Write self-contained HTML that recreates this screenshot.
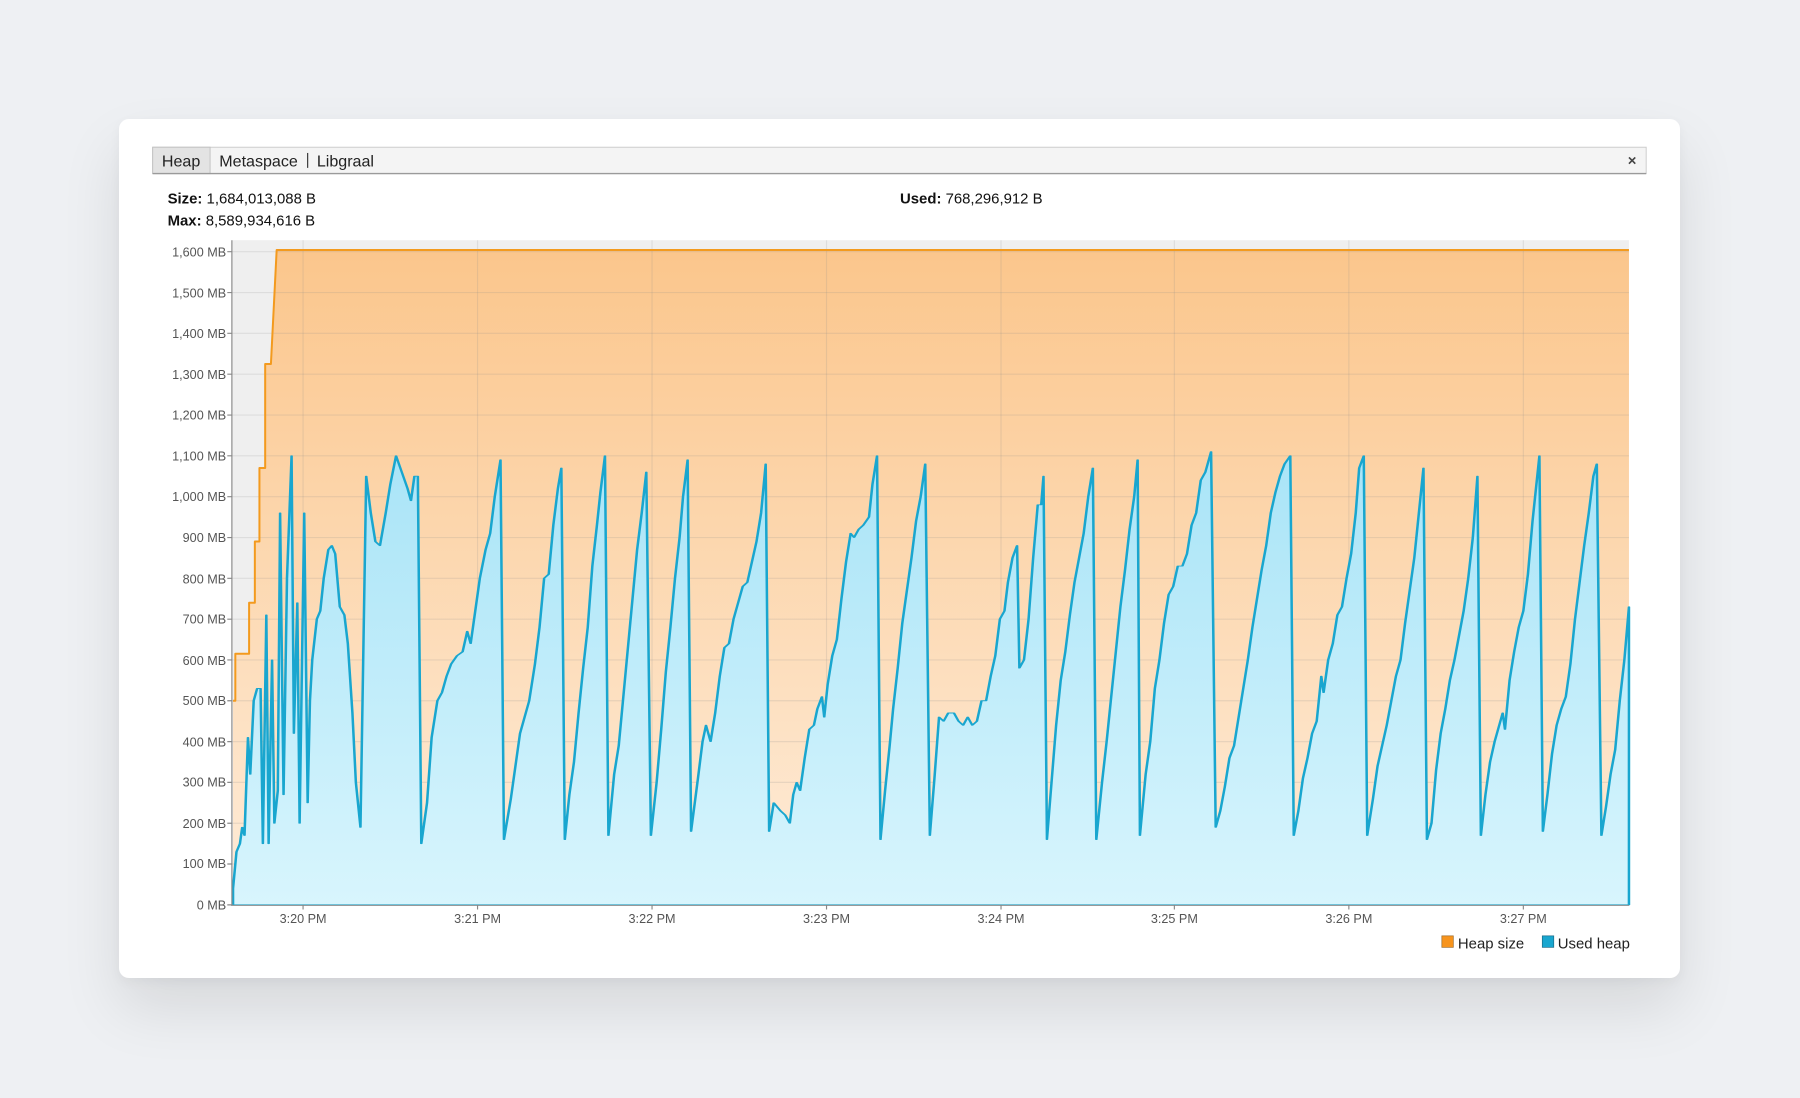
<!DOCTYPE html>
<html><head><meta charset="utf-8"><style>
html,body{margin:0;padding:0;width:1800px;height:1098px;background:#eef0f3;overflow:hidden}
.card{position:absolute;left:119px;top:119px;width:1561px;height:859px;background:#fff;border-radius:10px;box-shadow:0 30px 60px rgba(0,0,0,0.10),0 4px 12px rgba(0,0,0,0.04)}
svg{position:absolute;left:0;top:0}
text{font-family:"Liberation Sans",sans-serif}
</style></head><body>
<div class="card"></div>
<svg width="1800" height="1098" viewBox="0 0 1568 956">
<defs>
<linearGradient id="og" x1="0" y1="0" x2="0" y2="1">
<stop offset="0" stop-color="#feecd9"/><stop offset="1" stop-color="#fbc68c"/></linearGradient>
<linearGradient id="bg" x1="0" y1="0" x2="0" y2="1">
<stop offset="0" stop-color="#d8f5fd"/><stop offset="1" stop-color="#a9e4f7"/></linearGradient>
</defs>
<!-- tabs -->
<rect x="133" y="128" width="1301" height="23" fill="#f4f4f4" stroke="#c9c9c9" stroke-width="0.8"/>
<rect x="133" y="128" width="50" height="23" fill="#e3e3e3" stroke="#c0c0c0" stroke-width="0.8"/>
<line x1="133" y1="151" x2="1434" y2="151" stroke="#9a9a9a" stroke-width="1.2"/>
<text x="141" y="145" font-size="14" fill="#222">Heap</text>
<text x="191" y="145" font-size="14" fill="#222">Metaspace</text>
<line x1="268" y1="133" x2="268" y2="146" stroke="#333" stroke-width="1"/>
<text x="276" y="145" font-size="14" fill="#222">Libgraal</text>
<text x="1418" y="144" font-size="13" font-weight="bold" fill="#444">×</text>
<!-- info -->
<text x="146" y="177" font-size="13" fill="#111"><tspan font-weight="bold">Size:</tspan> 1,684,013,088 B</text>
<text x="146" y="196" font-size="13" fill="#111"><tspan font-weight="bold">Max:</tspan> 8,589,934,616 B</text>
<text x="784" y="177" font-size="13" fill="#111"><tspan font-weight="bold">Used:</tspan> 768,296,912 B</text>
<!-- plot bg -->
<rect x="202" y="209" width="1217" height="579" fill="#efefef"/>
<g transform="translate(0,788) scale(1,-0.35563)">
<path fill="url(#og)" d="M203,0 L203,500 L205,500 L205,615 L217,615 L217,740 L222,740 L222,890 L226,890 L226,1070 L231,1070 L231,1325 L236,1325 L241,1604 L1419,1604 L1419,0 Z"/>
<path id="u" fill="url(#bg)" d="M203,0 L203,40 L206,130 L209,150 L211,190 L213,170 L216,410 L218,320 L221,500 L224,530 L227,530 L229,150 L232,710 L234,150 L237,600 L239,200 L242,280 L244,960 L247,270 L250,800 L254,1100 L256,420 L259,740 L261,200 L265,960 L268,250 L270,500 L272,600 L276,700 L279,720 L282,800 L286,870 L289,880 L292,860 L296,730 L300,710 L303,640 L307,470 L310,300 L314,190 L319,1050 L323,960 L327,890 L331,880 L336,960 L340,1030 L345,1100 L350,1060 L355,1020 L358,990 L361,1050 L364,1050 L367,150 L372,250 L376,410 L381,500 L385,520 L389,560 L393,590 L398,610 L403,620 L407,670 L410,640 L414,720 L418,800 L423,870 L427,910 L431,1000 L436,1090 L439,160 L445,260 L449,340 L453,420 L457,460 L461,500 L466,590 L470,680 L474,800 L478,810 L482,930 L486,1020 L489,1070 L492,160 L496,270 L500,350 L504,470 L508,580 L512,680 L516,830 L520,930 L523,1010 L527,1100 L530,170 L535,320 L539,390 L543,510 L547,630 L551,750 L555,870 L559,960 L563,1060 L567,170 L572,300 L576,430 L580,570 L584,680 L588,800 L592,900 L595,1000 L599,1090 L602,180 L608,310 L612,400 L615,440 L619,400 L623,470 L627,560 L631,630 L635,640 L639,700 L643,740 L647,780 L651,790 L655,840 L659,890 L663,960 L667,1080 L670,180 L674,250 L677,240 L680,230 L684,220 L688,200 L691,270 L694,300 L697,280 L701,360 L705,430 L709,440 L712,480 L716,510 L718,460 L721,540 L725,610 L729,650 L733,750 L737,840 L741,910 L744,900 L748,920 L752,930 L757,950 L760,1030 L764,1100 L767,160 L771,280 L775,390 L778,480 L782,580 L786,690 L790,770 L794,850 L798,940 L802,1000 L806,1080 L810,170 L814,310 L818,460 L822,450 L826,470 L831,470 L835,450 L839,440 L843,460 L847,440 L851,450 L855,500 L859,500 L863,560 L867,610 L871,700 L875,720 L878,790 L882,850 L886,880 L888,580 L892,600 L896,700 L900,850 L904,980 L907,980 L909,1050 L912,160 L916,300 L920,440 L924,550 L928,620 L932,710 L936,790 L940,850 L944,910 L948,1000 L952,1070 L955,160 L960,300 L964,400 L968,510 L972,620 L976,730 L980,820 L984,920 L988,1000 L991,1090 L993,170 L998,320 L1002,400 L1006,530 L1010,600 L1014,690 L1018,760 L1022,780 L1026,830 L1030,830 L1034,860 L1038,930 L1042,960 L1046,1040 L1050,1060 L1055,1110 L1059,190 L1063,230 L1067,290 L1071,360 L1075,390 L1079,460 L1083,530 L1087,600 L1091,680 L1095,750 L1099,820 L1103,880 L1107,960 L1111,1010 L1115,1050 L1119,1080 L1124,1100 L1127,170 L1131,230 L1135,310 L1139,360 L1143,420 L1147,450 L1151,560 L1153,520 L1157,600 L1161,640 L1165,710 L1169,730 L1173,800 L1177,860 L1181,960 L1184,1070 L1188,1100 L1191,170 L1196,260 L1200,340 L1204,390 L1208,440 L1212,500 L1216,560 L1220,600 L1224,690 L1228,770 L1232,850 L1236,960 L1240,1070 L1243,160 L1247,200 L1251,330 L1255,420 L1259,480 L1263,550 L1267,600 L1271,660 L1275,720 L1279,800 L1283,900 L1287,1050 L1290,170 L1294,270 L1298,350 L1302,400 L1306,440 L1309,470 L1311,430 L1315,550 L1319,620 L1323,680 L1327,720 L1331,810 L1335,940 L1338,1020 L1341,1100 L1344,180 L1348,270 L1352,370 L1356,440 L1360,480 L1364,510 L1368,590 L1372,700 L1376,790 L1380,880 L1384,960 L1388,1050 L1391,1080 L1395,170 L1399,240 L1403,320 L1407,380 L1411,500 L1415,600 L1419,730 L1419,0 Z"/>
</g>
<!-- grid -->
<g stroke="#8a8a8a" stroke-opacity="0.18" stroke-width="1">
<line x1="202" y1="219" x2="1419" y2="219"/><line x1="202" y1="254.6" x2="1419" y2="254.6"/><line x1="202" y1="290.1" x2="1419" y2="290.1"/><line x1="202" y1="325.7" x2="1419" y2="325.7"/><line x1="202" y1="361.3" x2="1419" y2="361.3"/><line x1="202" y1="396.8" x2="1419" y2="396.8"/><line x1="202" y1="432.4" x2="1419" y2="432.4"/><line x1="202" y1="468" x2="1419" y2="468"/><line x1="202" y1="503.5" x2="1419" y2="503.5"/><line x1="202" y1="539.1" x2="1419" y2="539.1"/><line x1="202" y1="574.6" x2="1419" y2="574.6"/><line x1="202" y1="610.2" x2="1419" y2="610.2"/><line x1="202" y1="645.8" x2="1419" y2="645.8"/><line x1="202" y1="681.3" x2="1419" y2="681.3"/><line x1="202" y1="716.9" x2="1419" y2="716.9"/><line x1="202" y1="752.4" x2="1419" y2="752.4"/>
<line x1="264" y1="209" x2="264" y2="788"/><line x1="416" y1="209" x2="416" y2="788"/><line x1="568" y1="209" x2="568" y2="788"/><line x1="720" y1="209" x2="720" y2="788"/><line x1="872" y1="209" x2="872" y2="788"/><line x1="1023" y1="209" x2="1023" y2="788"/><line x1="1175" y1="209" x2="1175" y2="788"/><line x1="1327" y1="209" x2="1327" y2="788"/>
</g>
<!-- lines -->
<g transform="translate(0,788) scale(1,-0.35563)" fill="none" stroke-width="2" stroke-linejoin="round">
<path vector-effect="non-scaling-stroke" stroke="#f39a1e" stroke-width="2" d="M203,500 L205,500 L205,615 L217,615 L217,740 L222,740 L222,890 L226,890 L226,1070 L231,1070 L231,1325 L236,1325 L241,1604 L1419,1604"/>
<use href="#u" fill="none" stroke="#19a6cf" vector-effect="non-scaling-stroke" stroke-width="2.2"/>
</g>
<!-- axes -->
<line x1="202" y1="209" x2="202" y2="789" stroke="#888" stroke-width="1"/>
<line x1="202" y1="788.5" x2="1419" y2="788.5" stroke="#999" stroke-width="1"/>
<g font-size="11" fill="#555" text-anchor="end">
<text x="197" y="223">1,600 MB</text><text x="197" y="259">1,500 MB</text><text x="197" y="294">1,400 MB</text><text x="197" y="330">1,300 MB</text><text x="197" y="365">1,200 MB</text><text x="197" y="401">1,100 MB</text><text x="197" y="436">1,000 MB</text><text x="197" y="472">900 MB</text><text x="197" y="508">800 MB</text><text x="197" y="543">700 MB</text><text x="197" y="579">600 MB</text><text x="197" y="614">500 MB</text><text x="197" y="650">400 MB</text><text x="197" y="685">300 MB</text><text x="197" y="721">200 MB</text><text x="197" y="756">100 MB</text><text x="197" y="792">0 MB</text>
</g>
<g stroke="#888" stroke-width="1">
<path d="M198,219H202M198,254.6H202M198,290.1H202M198,325.7H202M198,361.3H202M198,396.8H202M198,432.4H202M198,468H202M198,503.5H202M198,539.1H202M198,574.6H202M198,610.2H202M198,645.8H202M198,681.3H202M198,716.9H202M198,752.4H202M198,788H202"/>
<path d="M264,788V792M416,788V792M568,788V792M720,788V792M872,788V792M1023,788V792M1175,788V792M1327,788V792"/>
</g>
<g font-size="11" fill="#555" text-anchor="middle">
<text x="264" y="804">3:20 PM</text><text x="416" y="804">3:21 PM</text><text x="568" y="804">3:22 PM</text><text x="720" y="804">3:23 PM</text><text x="872" y="804">3:24 PM</text><text x="1023" y="804">3:25 PM</text><text x="1175" y="804">3:26 PM</text><text x="1327" y="804">3:27 PM</text>
</g>
<!-- legend -->
<rect x="1256" y="815" width="10" height="10" fill="#f7941d" stroke="#9a6a2a" stroke-width="0.6"/>
<text x="1270" y="826" font-size="13" fill="#222">Heap size</text>
<rect x="1343.5" y="815" width="10" height="10" fill="#19a6cf" stroke="#1a6a86" stroke-width="0.6"/>
<text x="1357" y="826" font-size="13" fill="#222">Used heap</text>
</svg>
</body></html>
